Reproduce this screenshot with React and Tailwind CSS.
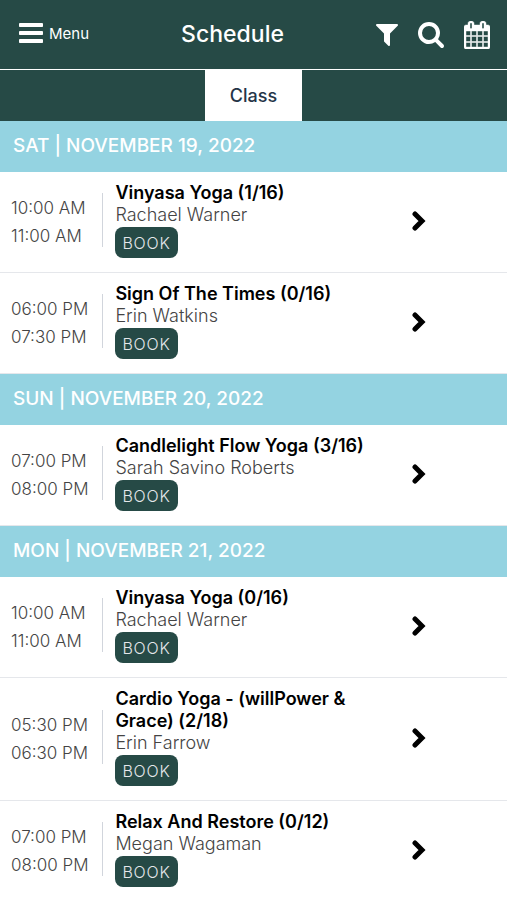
import React, { useState } from 'react';

const schedule = [
  {
    date: 'SAT | NOVEMBER 19, 2022',
    classes: [
      { title: 'Vinyasa Yoga (1/16)', teacher: 'Rachael Warner', start: '10:00 AM', end: '11:00 AM' },
      { title: 'Sign Of The Times (0/16)', teacher: 'Erin Watkins', start: '06:00 PM', end: '07:30 PM' },
    ],
  },
  {
    date: 'SUN | NOVEMBER 20, 2022',
    classes: [
      { title: 'Candlelight Flow Yoga (3/16)', teacher: 'Sarah Savino Roberts', start: '07:00 PM', end: '08:00 PM' },
    ],
  },
  {
    date: 'MON | NOVEMBER 21, 2022',
    classes: [
      { title: 'Vinyasa Yoga (0/16)', teacher: 'Rachael Warner', start: '10:00 AM', end: '11:00 AM' },
      { title: 'Cardio Yoga - (willPower & Grace) (2/18)', teacher: 'Erin Farrow', start: '05:30 PM', end: '06:30 PM' },
      { title: 'Relax And Restore (0/12)', teacher: 'Megan Wagaman', start: '07:00 PM', end: '08:00 PM' },
    ],
  },
];

const BarsIcon = () => (
  <svg viewBox="128 0 1536 1792" className="w-6 h-7" fill="currentColor" aria-hidden="true">
    <path d="M1664 1344v128q0 26-19 45t-45 19h-1408q-26 0-45-19t-19-45v-128q0-26 19-45t45-19h1408q26 0 45 19t19 45zm0-512v128q0 26-19 45t-45 19h-1408q-26 0-45-19t-19-45v-128q0-26 19-45t45-19h1408q26 0 45 19t19 45zm0-512v128q0 26-19 45t-45 19h-1408q-26 0-45-19t-19-45v-128q0-26 19-45t45-19h1408q26 0 45 19t19 45z" />
  </svg>
);

const FilterIcon = () => (
  <svg viewBox="192 256 1408 1408" className="size-[22px]" fill="currentColor" aria-hidden="true">
    <path d="M1595 295q17 41-14 70l-493 493v742q0 42-39 59-13 5-25 5-27 0-45-19l-256-256q-19-19-19-45v-486l-493-493q-31-29-14-70 17-39 59-39h1280q42 0 59 39z" />
  </svg>
);

const SearchIcon = () => (
  <svg viewBox="64 128 1664 1664" className="size-[26px]" fill="currentColor" aria-hidden="true">
    <path d="M1216 832q0-185-131.5-316.5t-316.5-131.5-316.5 131.5-131.5 316.5 131.5 316.5 316.5 131.5 316.5-131.5 131.5-316.5zm512 832q0 52-38 90t-90 38q-54 0-90-38l-343-342q-179 124-399 124-143 0-273.5-55.5t-225-150-150-225-55.5-273.5 55.5-273.5 150-225 225-150 273.5-55.5 273.5 55.5 225 150 150 225 55.5 273.5q0 220-124 399l343 343q37 37 37 90z" />
  </svg>
);

const CalendarIcon = () => (
  <svg viewBox="0 0 1664 1792" className="w-[26px] h-7" fill="currentColor" stroke="currentColor" strokeWidth="28" aria-hidden="true">
    <path d="M128 1664h288v-288h-288v288zm352 0h320v-288h-320v288zm-352-352h288v-320h-288v320zm352 0h320v-320h-320v320zm-352-384h288v-288h-288v288zm736 736h320v-288h-320v288zm-384-736h320v-288h-320v288zm768 736h288v-288h-288v288zm-384-352h320v-320h-320v320zm-352-864v-288q0-13-9.5-22.5t-22.5-9.5h-64q-13 0-22.5 9.5t-9.5 22.5v288q0 13 9.5 22.5t22.5 9.5h64q13 0 22.5-9.5t9.5-22.5zm736 864h288v-320h-288v320zm-384-384h320v-288h-320v288zm384 0h288v-288h-288v288zm32-480v-288q0-13-9.5-22.5t-22.5-9.5h-64q-13 0-22.5 9.5t-9.5 22.5v288q0 13 9.5 22.5t22.5 9.5h64q13 0 22.5-9.5t9.5-22.5zm384-64v1280q0 52-38 90t-90 38h-1408q-52 0-90-38t-38-90v-1280q0-52 38-90t90-38h128v-96q0-66 47-113t113-47h64q66 0 113 47t47 113v96h384v-96q0-66 47-113t113-47h64q66 0 113 47t47 113v96h128q52 0 90 38t38 90z" />
  </svg>
);

const ChevronIcon = () => (
  <svg viewBox="0 0 14 20" className="w-[14px] h-5" fill="none" stroke="currentColor" strokeWidth="5" aria-hidden="true">
    <path d="M3 3l7 7-7 7" strokeLinecap="round" />
  </svg>
);

function ClassRow({ item }) {
  return (
    <li className="grid grid-cols-5 items-center border-b border-gray-200 pt-[10px] pb-[14px]">
      <div className="pt-1 pl-[11px] text-[17px] leading-7 font-light text-[#444] whitespace-nowrap">
        <div>{item.start}</div>
        <div>{item.end}</div>
      </div>
      <div className="col-span-3 flex items-center">
        <div className="ml-px h-[54px] w-px shrink-0 bg-gray-300" />
        <div className="px-3 text-lg leading-[22px]">
          <h3 className="font-semibold text-black">{item.title}</h3>
          <p className="font-light text-[#444]">{item.teacher}</p>
          <button className="mt-px block h-[31px] rounded-lg bg-[#264a46] px-[7px] text-base font-light tracking-wider text-gray-200">
            BOOK
          </button>
        </div>
      </div>
      <button aria-label="View class" className="justify-self-start pt-0.5 pl-[6px] text-black">
        <ChevronIcon />
      </button>
    </li>
  );
}

export default function App() {
  const [activeTab, setActiveTab] = useState('class');

  return (
    <div className="h-screen overflow-y-auto bg-white font-['Inter','Open_Sans',sans-serif] [scrollbar-width:none]">
      {/* Header */}
      <header className="flex h-[70px] items-center justify-between border-b border-white bg-[#264a46] pr-[17px] pl-[19px] text-white">
        <button className="flex items-center gap-[6px] pb-1">
          <BarsIcon />
          <span className="pt-1 text-[15px]">Menu</span>
        </button>
        <h1 className="text-[23px] font-medium">Schedule</h1>
        <div className="flex items-center gap-5">
          <button aria-label="Filter"><FilterIcon /></button>
          <button aria-label="Search"><SearchIcon /></button>
          <button aria-label="Calendar"><CalendarIcon /></button>
        </div>
      </header>

      {/* Tabs */}
      <nav className="flex h-[51px] justify-center bg-[#264a46]">
        <button
          onClick={() => setActiveTab('class')}
          className={`px-[25px] text-lg font-medium ${activeTab === 'class' ? 'bg-white text-[#243447]' : 'text-white'}`}
        >
          Class
        </button>
      </nav>

      {/* Class list by day */}
      <main>
        {schedule.map((day) => (
          <section key={day.date}>
            <h2 className="flex h-[51px] items-center bg-[#94d3e1] px-[13px] text-[19px] font-medium text-white">
              {day.date}
            </h2>
            <ul>
              {day.classes.map((item) => (
                <ClassRow key={item.title} item={item} />
              ))}
            </ul>
          </section>
        ))}
      </main>
    </div>
  );
}
